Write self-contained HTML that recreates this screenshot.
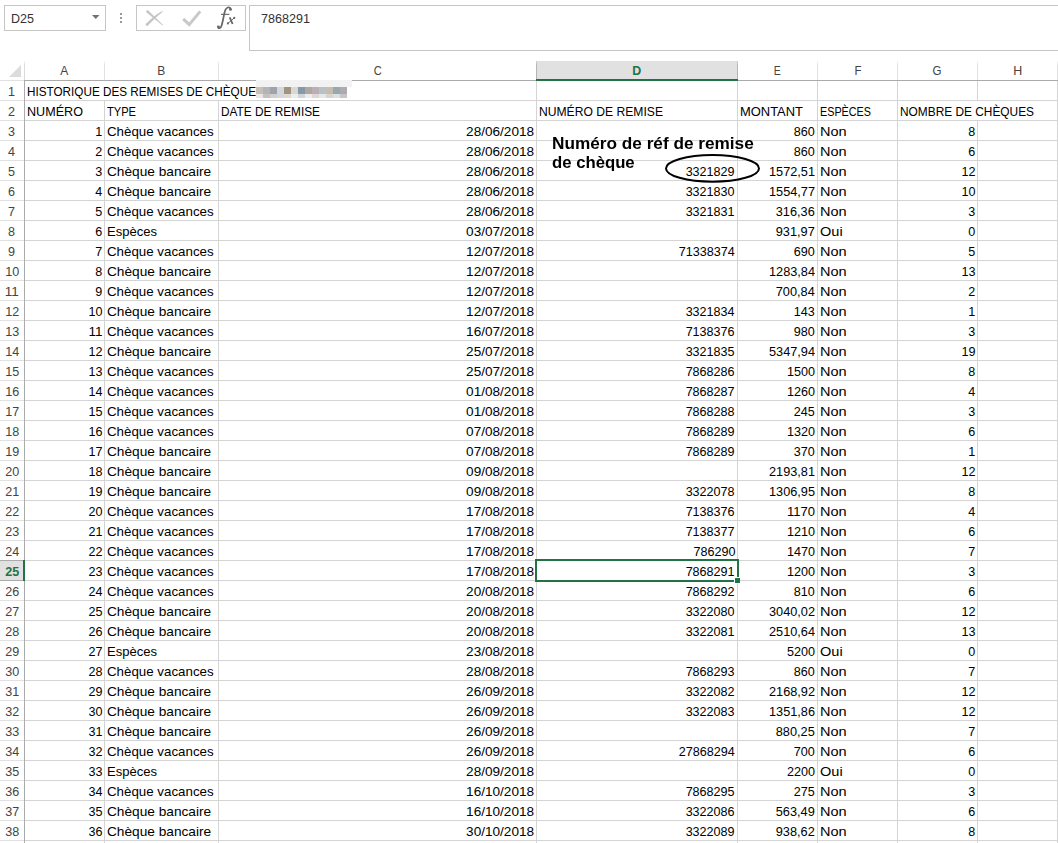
<!DOCTYPE html>
<html><head><meta charset="utf-8"><style>
html,body{margin:0;padding:0;background:#fff;}
body{width:1058px;height:843px;overflow:hidden;position:relative;}
.t{position:absolute;white-space:nowrap;line-height:1;}
.cell,.hdr,.hdrb{font-family:"Liberation Sans",sans-serif;font-size:13.0px;}
.hdrb{font-weight:bold;}
.ann{will-change:transform;font-family:"Liberation Sans",sans-serif;font-size:16.0px;font-weight:bold;}
</style></head><body>
<div style='position:absolute;left:104px;top:61px;width:1px;height:19px;background:#e1e1e1;background:linear-gradient(#f6f6f6,#e1e1e1 25%)'></div>
<div style='position:absolute;left:218px;top:61px;width:1px;height:19px;background:#e1e1e1;background:linear-gradient(#f6f6f6,#e1e1e1 25%)'></div>
<div style='position:absolute;left:536px;top:61px;width:1px;height:19px;background:#e1e1e1;background:linear-gradient(#f6f6f6,#e1e1e1 25%)'></div>
<div style='position:absolute;left:737px;top:61px;width:1px;height:19px;background:#e1e1e1;background:linear-gradient(#f6f6f6,#e1e1e1 25%)'></div>
<div style='position:absolute;left:817px;top:61px;width:1px;height:19px;background:#e1e1e1;background:linear-gradient(#f6f6f6,#e1e1e1 25%)'></div>
<div style='position:absolute;left:897px;top:61px;width:1px;height:19px;background:#e1e1e1;background:linear-gradient(#f6f6f6,#e1e1e1 25%)'></div>
<div style='position:absolute;left:977px;top:61px;width:1px;height:19px;background:#e1e1e1;background:linear-gradient(#f6f6f6,#e1e1e1 25%)'></div>
<div style='position:absolute;left:1057px;top:61px;width:1px;height:19px;background:#e1e1e1;background:linear-gradient(#f6f6f6,#e1e1e1 25%)'></div>
<div style='position:absolute;left:537px;top:61px;width:200px;height:18px;background:#e1e1e1;'></div>
<div style='position:absolute;left:536px;top:61px;width:1px;height:19px;background:#ababab;background:linear-gradient(#d0d0d0,#b4b4b4 25%)'></div>
<div style='position:absolute;left:737px;top:61px;width:1px;height:19px;background:#ababab;background:linear-gradient(#d0d0d0,#b4b4b4 25%)'></div>
<div style='position:absolute;left:0px;top:80px;width:24px;height:1px;background:#e1e1e1;'></div>
<div style='position:absolute;left:24px;top:80px;width:1034px;height:1px;background:#ababab;'></div>
<div style='position:absolute;left:536px;top:79px;width:202px;height:2px;background:#217346;'></div>
<div style='position:absolute;left:24px;top:61px;width:1px;height:19px;background:#e1e1e1;background:linear-gradient(#f6f6f6,#dadada 25%)'></div>
<div style='position:absolute;left:24px;top:80px;width:1px;height:763px;background:#ababab;'></div>
<div style='position:absolute;left:0px;top:100px;width:24px;height:1px;background:#e1e1e1;'></div>
<div style='position:absolute;left:25px;top:100px;width:1033px;height:1px;background:#d4d4d4;'></div>
<div style='position:absolute;left:0px;top:120px;width:24px;height:1px;background:#e1e1e1;'></div>
<div style='position:absolute;left:25px;top:120px;width:1033px;height:1px;background:#d4d4d4;'></div>
<div style='position:absolute;left:0px;top:140px;width:24px;height:1px;background:#e1e1e1;'></div>
<div style='position:absolute;left:25px;top:140px;width:1033px;height:1px;background:#d4d4d4;'></div>
<div style='position:absolute;left:0px;top:160px;width:24px;height:1px;background:#e1e1e1;'></div>
<div style='position:absolute;left:25px;top:160px;width:1033px;height:1px;background:#d4d4d4;'></div>
<div style='position:absolute;left:0px;top:180px;width:24px;height:1px;background:#e1e1e1;'></div>
<div style='position:absolute;left:25px;top:180px;width:1033px;height:1px;background:#d4d4d4;'></div>
<div style='position:absolute;left:0px;top:200px;width:24px;height:1px;background:#e1e1e1;'></div>
<div style='position:absolute;left:25px;top:200px;width:1033px;height:1px;background:#d4d4d4;'></div>
<div style='position:absolute;left:0px;top:220px;width:24px;height:1px;background:#e1e1e1;'></div>
<div style='position:absolute;left:25px;top:220px;width:1033px;height:1px;background:#d4d4d4;'></div>
<div style='position:absolute;left:0px;top:240px;width:24px;height:1px;background:#e1e1e1;'></div>
<div style='position:absolute;left:25px;top:240px;width:1033px;height:1px;background:#d4d4d4;'></div>
<div style='position:absolute;left:0px;top:260px;width:24px;height:1px;background:#e1e1e1;'></div>
<div style='position:absolute;left:25px;top:260px;width:1033px;height:1px;background:#d4d4d4;'></div>
<div style='position:absolute;left:0px;top:280px;width:24px;height:1px;background:#e1e1e1;'></div>
<div style='position:absolute;left:25px;top:280px;width:1033px;height:1px;background:#d4d4d4;'></div>
<div style='position:absolute;left:0px;top:300px;width:24px;height:1px;background:#e1e1e1;'></div>
<div style='position:absolute;left:25px;top:300px;width:1033px;height:1px;background:#d4d4d4;'></div>
<div style='position:absolute;left:0px;top:320px;width:24px;height:1px;background:#e1e1e1;'></div>
<div style='position:absolute;left:25px;top:320px;width:1033px;height:1px;background:#d4d4d4;'></div>
<div style='position:absolute;left:0px;top:340px;width:24px;height:1px;background:#e1e1e1;'></div>
<div style='position:absolute;left:25px;top:340px;width:1033px;height:1px;background:#d4d4d4;'></div>
<div style='position:absolute;left:0px;top:360px;width:24px;height:1px;background:#e1e1e1;'></div>
<div style='position:absolute;left:25px;top:360px;width:1033px;height:1px;background:#d4d4d4;'></div>
<div style='position:absolute;left:0px;top:380px;width:24px;height:1px;background:#e1e1e1;'></div>
<div style='position:absolute;left:25px;top:380px;width:1033px;height:1px;background:#d4d4d4;'></div>
<div style='position:absolute;left:0px;top:400px;width:24px;height:1px;background:#e1e1e1;'></div>
<div style='position:absolute;left:25px;top:400px;width:1033px;height:1px;background:#d4d4d4;'></div>
<div style='position:absolute;left:0px;top:420px;width:24px;height:1px;background:#e1e1e1;'></div>
<div style='position:absolute;left:25px;top:420px;width:1033px;height:1px;background:#d4d4d4;'></div>
<div style='position:absolute;left:0px;top:440px;width:24px;height:1px;background:#e1e1e1;'></div>
<div style='position:absolute;left:25px;top:440px;width:1033px;height:1px;background:#d4d4d4;'></div>
<div style='position:absolute;left:0px;top:460px;width:24px;height:1px;background:#e1e1e1;'></div>
<div style='position:absolute;left:25px;top:460px;width:1033px;height:1px;background:#d4d4d4;'></div>
<div style='position:absolute;left:0px;top:480px;width:24px;height:1px;background:#e1e1e1;'></div>
<div style='position:absolute;left:25px;top:480px;width:1033px;height:1px;background:#d4d4d4;'></div>
<div style='position:absolute;left:0px;top:500px;width:24px;height:1px;background:#e1e1e1;'></div>
<div style='position:absolute;left:25px;top:500px;width:1033px;height:1px;background:#d4d4d4;'></div>
<div style='position:absolute;left:0px;top:520px;width:24px;height:1px;background:#e1e1e1;'></div>
<div style='position:absolute;left:25px;top:520px;width:1033px;height:1px;background:#d4d4d4;'></div>
<div style='position:absolute;left:0px;top:540px;width:24px;height:1px;background:#e1e1e1;'></div>
<div style='position:absolute;left:25px;top:540px;width:1033px;height:1px;background:#d4d4d4;'></div>
<div style='position:absolute;left:0px;top:560px;width:24px;height:1px;background:#e1e1e1;'></div>
<div style='position:absolute;left:25px;top:560px;width:1033px;height:1px;background:#d4d4d4;'></div>
<div style='position:absolute;left:0px;top:580px;width:24px;height:1px;background:#e1e1e1;'></div>
<div style='position:absolute;left:25px;top:580px;width:1033px;height:1px;background:#d4d4d4;'></div>
<div style='position:absolute;left:0px;top:600px;width:24px;height:1px;background:#e1e1e1;'></div>
<div style='position:absolute;left:25px;top:600px;width:1033px;height:1px;background:#d4d4d4;'></div>
<div style='position:absolute;left:0px;top:620px;width:24px;height:1px;background:#e1e1e1;'></div>
<div style='position:absolute;left:25px;top:620px;width:1033px;height:1px;background:#d4d4d4;'></div>
<div style='position:absolute;left:0px;top:640px;width:24px;height:1px;background:#e1e1e1;'></div>
<div style='position:absolute;left:25px;top:640px;width:1033px;height:1px;background:#d4d4d4;'></div>
<div style='position:absolute;left:0px;top:660px;width:24px;height:1px;background:#e1e1e1;'></div>
<div style='position:absolute;left:25px;top:660px;width:1033px;height:1px;background:#d4d4d4;'></div>
<div style='position:absolute;left:0px;top:680px;width:24px;height:1px;background:#e1e1e1;'></div>
<div style='position:absolute;left:25px;top:680px;width:1033px;height:1px;background:#d4d4d4;'></div>
<div style='position:absolute;left:0px;top:700px;width:24px;height:1px;background:#e1e1e1;'></div>
<div style='position:absolute;left:25px;top:700px;width:1033px;height:1px;background:#d4d4d4;'></div>
<div style='position:absolute;left:0px;top:720px;width:24px;height:1px;background:#e1e1e1;'></div>
<div style='position:absolute;left:25px;top:720px;width:1033px;height:1px;background:#d4d4d4;'></div>
<div style='position:absolute;left:0px;top:740px;width:24px;height:1px;background:#e1e1e1;'></div>
<div style='position:absolute;left:25px;top:740px;width:1033px;height:1px;background:#d4d4d4;'></div>
<div style='position:absolute;left:0px;top:760px;width:24px;height:1px;background:#e1e1e1;'></div>
<div style='position:absolute;left:25px;top:760px;width:1033px;height:1px;background:#d4d4d4;'></div>
<div style='position:absolute;left:0px;top:780px;width:24px;height:1px;background:#e1e1e1;'></div>
<div style='position:absolute;left:25px;top:780px;width:1033px;height:1px;background:#d4d4d4;'></div>
<div style='position:absolute;left:0px;top:800px;width:24px;height:1px;background:#e1e1e1;'></div>
<div style='position:absolute;left:25px;top:800px;width:1033px;height:1px;background:#d4d4d4;'></div>
<div style='position:absolute;left:0px;top:820px;width:24px;height:1px;background:#e1e1e1;'></div>
<div style='position:absolute;left:25px;top:820px;width:1033px;height:1px;background:#d4d4d4;'></div>
<div style='position:absolute;left:0px;top:840px;width:24px;height:1px;background:#e1e1e1;'></div>
<div style='position:absolute;left:25px;top:840px;width:1033px;height:1px;background:#d4d4d4;'></div>
<div style='position:absolute;left:104px;top:101px;width:1px;height:742px;background:#d4d4d4;'></div>
<div style='position:absolute;left:218px;top:101px;width:1px;height:742px;background:#d4d4d4;'></div>
<div style='position:absolute;left:536px;top:81px;width:1px;height:762px;background:#d4d4d4;'></div>
<div style='position:absolute;left:737px;top:81px;width:1px;height:762px;background:#d4d4d4;'></div>
<div style='position:absolute;left:817px;top:81px;width:1px;height:762px;background:#d4d4d4;'></div>
<div style='position:absolute;left:897px;top:81px;width:1px;height:762px;background:#d4d4d4;'></div>
<div style='position:absolute;left:977px;top:81px;width:1px;height:20px;background:#d4d4d4;'></div>
<div style='position:absolute;left:977px;top:121px;width:1px;height:722px;background:#d4d4d4;'></div>
<div style='position:absolute;left:1057px;top:81px;width:1px;height:762px;background:#d4d4d4;'></div>
<div style='position:absolute;left:0px;top:561px;width:23px;height:19px;background:#e1e1e1;'></div>
<div style='position:absolute;left:0px;top:560px;width:24px;height:1px;background:#ababab;'></div>
<div style='position:absolute;left:0px;top:580px;width:24px;height:1px;background:#ababab;'></div>
<div style='position:absolute;left:23px;top:560px;width:2px;height:21px;background:#217346;'></div>
<div style='position:absolute;left:535px;top:559px;width:204px;height:2px;background:#217346;'></div>
<div style='position:absolute;left:535px;top:559px;width:2px;height:23px;background:#217346;'></div>
<div style='position:absolute;left:737px;top:559px;width:2px;height:18px;background:#217346;'></div>
<div style='position:absolute;left:535px;top:580px;width:199px;height:2px;background:#217346;'></div>
<div style='position:absolute;left:734px;top:577px;width:6px;height:6px;background:#fff;'></div>
<div style='position:absolute;left:735px;top:578px;width:5px;height:5px;background:#217346;'></div>
<svg style='position:absolute;left:0;top:60px' width='24' height='20'><polygon points='21,5 21,17 9,17' fill='#dcdcdc'/></svg>
<div style='position:absolute;left:4px;top:5px;width:100px;height:24px;border:1px solid #c6c6c6'></div>
<svg style='position:absolute;left:90px;top:13px' width='12' height='8'><polygon points='2,2 9.5,2 5.75,6' fill='#6e7276'/></svg>
<div style='position:absolute;left:120px;top:13px;width:2px;height:2px;background:#999;'></div>
<div style='position:absolute;left:120px;top:17px;width:2px;height:2px;background:#999;'></div>
<div style='position:absolute;left:120px;top:21px;width:2px;height:2px;background:#999;'></div>
<div style='position:absolute;left:136px;top:5px;width:108px;height:24px;border:1px solid #c6c6c6'></div>
<svg style='position:absolute;left:0;top:0' width='260' height='34'>
<g fill='#c6c6c6'>
<circle cx='147.6' cy='11.6' r='1.35'/>
<polygon points='146.65,12.55 148.55,10.65 163.1,25.0 162.5,25.6'/>
<circle cx='147.0' cy='24.6' r='1.3'/>
<path d='M146.1,23.8 Q153.5,15.6 162.3,10.9 L162.7,11.7 Q155.3,17.6 147.9,25.5 Z'/>
</g>
<path d='M183.2,18.8 L189.2,24.6 L200.2,11.4' stroke='#c8c8c8' stroke-width='3' fill='none' stroke-linejoin='miter'/>
<g fill='#666'>
<path d='M230.8,8.6 C229.2,6.6 226.4,7.0 225.1,10.6 C223.9,14.2 223.0,21.2 221.6,25.4 C220.9,27.6 219.6,28.9 218.1,27.9' stroke='#666' stroke-width='1.7' fill='none'/>
<circle cx='230.5' cy='9.4' r='1.45'/>
<circle cx='218.4' cy='26.9' r='1.45'/>
<rect x='221' y='13.8' width='8.4' height='1.1'/>
<path d='M227.6,23.6 L234.5,17.7' stroke='#666' stroke-width='1.0' fill='none'/>
<path d='M229.7,17.4 L232.6,24.0' stroke='#666' stroke-width='1.8' fill='none'/>
<circle cx='227.9' cy='23.4' r='1.05'/>
<circle cx='234.3' cy='17.9' r='1.05'/>
</g>
</svg>
<div style='position:absolute;left:249px;top:5px;width:820px;height:44px;border:1px solid #c6c6c6'></div>
<div style='position:absolute;left:256px;top:80px;width:96px;height:7px;background:#f2f2f2;'></div>
<div style='position:absolute;left:256px;top:87px;width:7px;height:7px;background:#c8c0b8;'></div>
<div style='position:absolute;left:256px;top:94px;width:7px;height:4px;background:#e8e8e8;'></div>
<div style='position:absolute;left:263px;top:87px;width:7px;height:7px;background:#b4b4b8;'></div>
<div style='position:absolute;left:263px;top:94px;width:7px;height:4px;background:#c8c0bc;'></div>
<div style='position:absolute;left:270px;top:87px;width:7px;height:7px;background:#a0a4a8;'></div>
<div style='position:absolute;left:270px;top:94px;width:7px;height:4px;background:#d0d0d0;'></div>
<div style='position:absolute;left:277px;top:87px;width:7px;height:7px;background:#d4d8dc;'></div>
<div style='position:absolute;left:277px;top:94px;width:7px;height:4px;background:#d4d8dc;'></div>
<div style='position:absolute;left:284px;top:87px;width:7px;height:7px;background:#a09480;'></div>
<div style='position:absolute;left:284px;top:94px;width:7px;height:4px;background:#e0d8d0;'></div>
<div style='position:absolute;left:291px;top:87px;width:7px;height:7px;background:#d8d8d4;'></div>
<div style='position:absolute;left:291px;top:94px;width:7px;height:4px;background:#eceeec;'></div>
<div style='position:absolute;left:298px;top:87px;width:7px;height:7px;background:#8898a4;'></div>
<div style='position:absolute;left:298px;top:94px;width:7px;height:4px;background:#d0d4dc;'></div>
<div style='position:absolute;left:305px;top:87px;width:7px;height:7px;background:#b0a8a0;'></div>
<div style='position:absolute;left:305px;top:94px;width:7px;height:4px;background:#ececec;'></div>
<div style='position:absolute;left:312px;top:87px;width:7px;height:7px;background:#b8b0b4;'></div>
<div style='position:absolute;left:312px;top:94px;width:7px;height:4px;background:#e0d4d4;'></div>
<div style='position:absolute;left:319px;top:87px;width:7px;height:7px;background:#b8c0c8;'></div>
<div style='position:absolute;left:319px;top:94px;width:7px;height:4px;background:#e4e8e8;'></div>
<div style='position:absolute;left:326px;top:87px;width:7px;height:7px;background:#c8bcb0;'></div>
<div style='position:absolute;left:326px;top:94px;width:7px;height:4px;background:#d8d4d0;'></div>
<div style='position:absolute;left:333px;top:87px;width:7px;height:7px;background:#98a8b0;'></div>
<div style='position:absolute;left:333px;top:94px;width:7px;height:4px;background:#dce0e4;'></div>
<div style='position:absolute;left:340px;top:87px;width:7px;height:7px;background:#acacb0;'></div>
<div style='position:absolute;left:340px;top:94px;width:7px;height:4px;background:#c8c4c8;'></div>
<svg style='position:absolute;left:660px;top:150px' width='110' height='40'><ellipse cx='52.5' cy='18.4' rx='46.5' ry='13.3' stroke='#000' stroke-width='2' fill='none'/></svg>
<span class='t cell' style='left:26.6px;transform-origin:0 0;top:85.00px;color:#000;transform:scaleX(0.9015)'>HISTORIQUE DES REMISES DE CHÈQUE</span>
<span class='t cell' style='left:26.6px;transform-origin:0 0;top:105.00px;color:#000;transform:scaleX(0.9692)'>NUMÉRO</span>
<span class='t cell' style='left:106.6px;transform-origin:0 0;top:105.00px;color:#000;transform:scaleX(0.8537)'>TYPE</span>
<span class='t cell' style='left:220.6px;transform-origin:0 0;top:105.00px;color:#000;transform:scaleX(0.9096)'>DATE DE REMISE</span>
<span class='t cell' style='left:538.6px;transform-origin:0 0;top:105.00px;color:#000;transform:scaleX(0.9330)'>NUMÉRO DE REMISE</span>
<span class='t cell' style='left:739.6px;transform-origin:0 0;top:105.00px;color:#000;transform:scaleX(0.9951)'>MONTANT</span>
<span class='t cell' style='left:819.6px;transform-origin:0 0;top:105.00px;color:#000;transform:scaleX(0.8303)'>ESPÈCES</span>
<span class='t cell' style='left:899.6px;transform-origin:0 0;top:105.00px;color:#000;transform:scaleX(0.9138)'>NOMBRE DE CHÈQUES</span>
<span class='t cell' style='right:956px;transform-origin:100% 0;top:125.00px;color:#000;transform:scaleX(0.9676)'>1</span>
<span class='t cell' style='left:106.6px;transform-origin:0 0;top:125.00px;color:#000;transform:scaleX(1.0247)'>Chèque vacances</span>
<span class='t cell' style='right:524px;transform-origin:100% 0;top:125.00px;color:#000;transform:scaleX(1.0449)'>28/06/2018</span>
<span class='t cell' style='right:243px;transform-origin:100% 0;top:125.00px;color:#000;transform:scaleX(0.9676)'>860</span>
<span class='t cell' style='left:819.6px;transform-origin:0 0;top:125.00px;color:#000;transform:scaleX(1.1158)'>Non</span>
<span class='t cell' style='right:83px;transform-origin:100% 0;top:125.00px;color:#000;transform:scaleX(0.9676)'>8</span>
<span class='t cell' style='right:956px;transform-origin:100% 0;top:145.00px;color:#000;transform:scaleX(0.9676)'>2</span>
<span class='t cell' style='left:106.6px;transform-origin:0 0;top:145.00px;color:#000;transform:scaleX(1.0247)'>Chèque vacances</span>
<span class='t cell' style='right:524px;transform-origin:100% 0;top:145.00px;color:#000;transform:scaleX(1.0449)'>28/06/2018</span>
<span class='t cell' style='right:243px;transform-origin:100% 0;top:145.00px;color:#000;transform:scaleX(0.9676)'>860</span>
<span class='t cell' style='left:819.6px;transform-origin:0 0;top:145.00px;color:#000;transform:scaleX(1.1158)'>Non</span>
<span class='t cell' style='right:83px;transform-origin:100% 0;top:145.00px;color:#000;transform:scaleX(0.9676)'>6</span>
<span class='t cell' style='right:956px;transform-origin:100% 0;top:165.00px;color:#000;transform:scaleX(0.9676)'>3</span>
<span class='t cell' style='left:106.6px;transform-origin:0 0;top:165.00px;color:#000;transform:scaleX(1.0517)'>Chèque bancaire</span>
<span class='t cell' style='right:524px;transform-origin:100% 0;top:165.00px;color:#000;transform:scaleX(1.0449)'>28/06/2018</span>
<span class='t cell' style='right:323px;transform-origin:100% 0;top:165.00px;color:#000;transform:scaleX(0.9679)'>3321829</span>
<span class='t cell' style='right:243px;transform-origin:100% 0;top:165.00px;color:#000;transform:scaleX(0.9787)'>1572,51</span>
<span class='t cell' style='left:819.6px;transform-origin:0 0;top:165.00px;color:#000;transform:scaleX(1.1158)'>Non</span>
<span class='t cell' style='right:83px;transform-origin:100% 0;top:165.00px;color:#000;transform:scaleX(0.9676)'>12</span>
<span class='t cell' style='right:956px;transform-origin:100% 0;top:185.00px;color:#000;transform:scaleX(0.9676)'>4</span>
<span class='t cell' style='left:106.6px;transform-origin:0 0;top:185.00px;color:#000;transform:scaleX(1.0517)'>Chèque bancaire</span>
<span class='t cell' style='right:524px;transform-origin:100% 0;top:185.00px;color:#000;transform:scaleX(1.0449)'>28/06/2018</span>
<span class='t cell' style='right:323px;transform-origin:100% 0;top:185.00px;color:#000;transform:scaleX(0.9679)'>3321830</span>
<span class='t cell' style='right:243px;transform-origin:100% 0;top:185.00px;color:#000;transform:scaleX(0.9787)'>1554,77</span>
<span class='t cell' style='left:819.6px;transform-origin:0 0;top:185.00px;color:#000;transform:scaleX(1.1158)'>Non</span>
<span class='t cell' style='right:83px;transform-origin:100% 0;top:185.00px;color:#000;transform:scaleX(0.9676)'>10</span>
<span class='t cell' style='right:956px;transform-origin:100% 0;top:205.00px;color:#000;transform:scaleX(0.9676)'>5</span>
<span class='t cell' style='left:106.6px;transform-origin:0 0;top:205.00px;color:#000;transform:scaleX(1.0247)'>Chèque vacances</span>
<span class='t cell' style='right:524px;transform-origin:100% 0;top:205.00px;color:#000;transform:scaleX(1.0449)'>28/06/2018</span>
<span class='t cell' style='right:323px;transform-origin:100% 0;top:205.00px;color:#000;transform:scaleX(0.9679)'>3321831</span>
<span class='t cell' style='right:243px;transform-origin:100% 0;top:205.00px;color:#000;transform:scaleX(0.9807)'>316,36</span>
<span class='t cell' style='left:819.6px;transform-origin:0 0;top:205.00px;color:#000;transform:scaleX(1.1158)'>Non</span>
<span class='t cell' style='right:83px;transform-origin:100% 0;top:205.00px;color:#000;transform:scaleX(0.9676)'>3</span>
<span class='t cell' style='right:956px;transform-origin:100% 0;top:225.00px;color:#000;transform:scaleX(0.9676)'>6</span>
<span class='t cell' style='left:106.6px;transform-origin:0 0;top:225.00px;color:#000;transform:scaleX(1.0027)'>Espèces</span>
<span class='t cell' style='right:524px;transform-origin:100% 0;top:225.00px;color:#000;transform:scaleX(1.0449)'>03/07/2018</span>
<span class='t cell' style='right:243px;transform-origin:100% 0;top:225.00px;color:#000;transform:scaleX(0.9807)'>931,97</span>
<span class='t cell' style='left:819.6px;transform-origin:0 0;top:225.00px;color:#000;transform:scaleX(1.1189)'>Oui</span>
<span class='t cell' style='right:83px;transform-origin:100% 0;top:225.00px;color:#000;transform:scaleX(0.9676)'>0</span>
<span class='t cell' style='right:956px;transform-origin:100% 0;top:245.00px;color:#000;transform:scaleX(0.9676)'>7</span>
<span class='t cell' style='left:106.6px;transform-origin:0 0;top:245.00px;color:#000;transform:scaleX(1.0247)'>Chèque vacances</span>
<span class='t cell' style='right:524px;transform-origin:100% 0;top:245.00px;color:#000;transform:scaleX(1.0449)'>12/07/2018</span>
<span class='t cell' style='right:323px;transform-origin:100% 0;top:245.00px;color:#000;transform:scaleX(0.9681)'>71338374</span>
<span class='t cell' style='right:243px;transform-origin:100% 0;top:245.00px;color:#000;transform:scaleX(0.9676)'>690</span>
<span class='t cell' style='left:819.6px;transform-origin:0 0;top:245.00px;color:#000;transform:scaleX(1.1158)'>Non</span>
<span class='t cell' style='right:83px;transform-origin:100% 0;top:245.00px;color:#000;transform:scaleX(0.9676)'>5</span>
<span class='t cell' style='right:956px;transform-origin:100% 0;top:265.00px;color:#000;transform:scaleX(0.9676)'>8</span>
<span class='t cell' style='left:106.6px;transform-origin:0 0;top:265.00px;color:#000;transform:scaleX(1.0517)'>Chèque bancaire</span>
<span class='t cell' style='right:524px;transform-origin:100% 0;top:265.00px;color:#000;transform:scaleX(1.0449)'>12/07/2018</span>
<span class='t cell' style='right:243px;transform-origin:100% 0;top:265.00px;color:#000;transform:scaleX(0.9787)'>1283,84</span>
<span class='t cell' style='left:819.6px;transform-origin:0 0;top:265.00px;color:#000;transform:scaleX(1.1158)'>Non</span>
<span class='t cell' style='right:83px;transform-origin:100% 0;top:265.00px;color:#000;transform:scaleX(0.9676)'>13</span>
<span class='t cell' style='right:956px;transform-origin:100% 0;top:285.00px;color:#000;transform:scaleX(0.9676)'>9</span>
<span class='t cell' style='left:106.6px;transform-origin:0 0;top:285.00px;color:#000;transform:scaleX(1.0247)'>Chèque vacances</span>
<span class='t cell' style='right:524px;transform-origin:100% 0;top:285.00px;color:#000;transform:scaleX(1.0449)'>12/07/2018</span>
<span class='t cell' style='right:243px;transform-origin:100% 0;top:285.00px;color:#000;transform:scaleX(0.9807)'>700,84</span>
<span class='t cell' style='left:819.6px;transform-origin:0 0;top:285.00px;color:#000;transform:scaleX(1.1158)'>Non</span>
<span class='t cell' style='right:83px;transform-origin:100% 0;top:285.00px;color:#000;transform:scaleX(0.9676)'>2</span>
<span class='t cell' style='right:956px;transform-origin:100% 0;top:305.00px;color:#000;transform:scaleX(0.9676)'>10</span>
<span class='t cell' style='left:106.6px;transform-origin:0 0;top:305.00px;color:#000;transform:scaleX(1.0517)'>Chèque bancaire</span>
<span class='t cell' style='right:524px;transform-origin:100% 0;top:305.00px;color:#000;transform:scaleX(1.0449)'>12/07/2018</span>
<span class='t cell' style='right:323px;transform-origin:100% 0;top:305.00px;color:#000;transform:scaleX(0.9679)'>3321834</span>
<span class='t cell' style='right:243px;transform-origin:100% 0;top:305.00px;color:#000;transform:scaleX(0.9676)'>143</span>
<span class='t cell' style='left:819.6px;transform-origin:0 0;top:305.00px;color:#000;transform:scaleX(1.1158)'>Non</span>
<span class='t cell' style='right:83px;transform-origin:100% 0;top:305.00px;color:#000;transform:scaleX(0.9676)'>1</span>
<span class='t cell' style='right:956px;transform-origin:100% 0;top:325.00px;color:#000;transform:scaleX(1.0370)'>11</span>
<span class='t cell' style='left:106.6px;transform-origin:0 0;top:325.00px;color:#000;transform:scaleX(1.0247)'>Chèque vacances</span>
<span class='t cell' style='right:524px;transform-origin:100% 0;top:325.00px;color:#000;transform:scaleX(1.0449)'>16/07/2018</span>
<span class='t cell' style='right:323px;transform-origin:100% 0;top:325.00px;color:#000;transform:scaleX(0.9679)'>7138376</span>
<span class='t cell' style='right:243px;transform-origin:100% 0;top:325.00px;color:#000;transform:scaleX(0.9676)'>980</span>
<span class='t cell' style='left:819.6px;transform-origin:0 0;top:325.00px;color:#000;transform:scaleX(1.1158)'>Non</span>
<span class='t cell' style='right:83px;transform-origin:100% 0;top:325.00px;color:#000;transform:scaleX(0.9676)'>3</span>
<span class='t cell' style='right:956px;transform-origin:100% 0;top:345.00px;color:#000;transform:scaleX(0.9676)'>12</span>
<span class='t cell' style='left:106.6px;transform-origin:0 0;top:345.00px;color:#000;transform:scaleX(1.0517)'>Chèque bancaire</span>
<span class='t cell' style='right:524px;transform-origin:100% 0;top:345.00px;color:#000;transform:scaleX(1.0449)'>25/07/2018</span>
<span class='t cell' style='right:323px;transform-origin:100% 0;top:345.00px;color:#000;transform:scaleX(0.9679)'>3321835</span>
<span class='t cell' style='right:243px;transform-origin:100% 0;top:345.00px;color:#000;transform:scaleX(0.9787)'>5347,94</span>
<span class='t cell' style='left:819.6px;transform-origin:0 0;top:345.00px;color:#000;transform:scaleX(1.1158)'>Non</span>
<span class='t cell' style='right:83px;transform-origin:100% 0;top:345.00px;color:#000;transform:scaleX(0.9676)'>19</span>
<span class='t cell' style='right:956px;transform-origin:100% 0;top:365.00px;color:#000;transform:scaleX(0.9676)'>13</span>
<span class='t cell' style='left:106.6px;transform-origin:0 0;top:365.00px;color:#000;transform:scaleX(1.0247)'>Chèque vacances</span>
<span class='t cell' style='right:524px;transform-origin:100% 0;top:365.00px;color:#000;transform:scaleX(1.0449)'>25/07/2018</span>
<span class='t cell' style='right:323px;transform-origin:100% 0;top:365.00px;color:#000;transform:scaleX(0.9679)'>7868286</span>
<span class='t cell' style='right:243px;transform-origin:100% 0;top:365.00px;color:#000;transform:scaleX(0.9681)'>1500</span>
<span class='t cell' style='left:819.6px;transform-origin:0 0;top:365.00px;color:#000;transform:scaleX(1.1158)'>Non</span>
<span class='t cell' style='right:83px;transform-origin:100% 0;top:365.00px;color:#000;transform:scaleX(0.9676)'>8</span>
<span class='t cell' style='right:956px;transform-origin:100% 0;top:385.00px;color:#000;transform:scaleX(0.9676)'>14</span>
<span class='t cell' style='left:106.6px;transform-origin:0 0;top:385.00px;color:#000;transform:scaleX(1.0247)'>Chèque vacances</span>
<span class='t cell' style='right:524px;transform-origin:100% 0;top:385.00px;color:#000;transform:scaleX(1.0449)'>01/08/2018</span>
<span class='t cell' style='right:323px;transform-origin:100% 0;top:385.00px;color:#000;transform:scaleX(0.9679)'>7868287</span>
<span class='t cell' style='right:243px;transform-origin:100% 0;top:385.00px;color:#000;transform:scaleX(0.9681)'>1260</span>
<span class='t cell' style='left:819.6px;transform-origin:0 0;top:385.00px;color:#000;transform:scaleX(1.1158)'>Non</span>
<span class='t cell' style='right:83px;transform-origin:100% 0;top:385.00px;color:#000;transform:scaleX(0.9676)'>4</span>
<span class='t cell' style='right:956px;transform-origin:100% 0;top:405.00px;color:#000;transform:scaleX(0.9676)'>15</span>
<span class='t cell' style='left:106.6px;transform-origin:0 0;top:405.00px;color:#000;transform:scaleX(1.0247)'>Chèque vacances</span>
<span class='t cell' style='right:524px;transform-origin:100% 0;top:405.00px;color:#000;transform:scaleX(1.0449)'>01/08/2018</span>
<span class='t cell' style='right:323px;transform-origin:100% 0;top:405.00px;color:#000;transform:scaleX(0.9679)'>7868288</span>
<span class='t cell' style='right:243px;transform-origin:100% 0;top:405.00px;color:#000;transform:scaleX(0.9676)'>245</span>
<span class='t cell' style='left:819.6px;transform-origin:0 0;top:405.00px;color:#000;transform:scaleX(1.1158)'>Non</span>
<span class='t cell' style='right:83px;transform-origin:100% 0;top:405.00px;color:#000;transform:scaleX(0.9676)'>3</span>
<span class='t cell' style='right:956px;transform-origin:100% 0;top:425.00px;color:#000;transform:scaleX(0.9676)'>16</span>
<span class='t cell' style='left:106.6px;transform-origin:0 0;top:425.00px;color:#000;transform:scaleX(1.0247)'>Chèque vacances</span>
<span class='t cell' style='right:524px;transform-origin:100% 0;top:425.00px;color:#000;transform:scaleX(1.0449)'>07/08/2018</span>
<span class='t cell' style='right:323px;transform-origin:100% 0;top:425.00px;color:#000;transform:scaleX(0.9679)'>7868289</span>
<span class='t cell' style='right:243px;transform-origin:100% 0;top:425.00px;color:#000;transform:scaleX(0.9681)'>1320</span>
<span class='t cell' style='left:819.6px;transform-origin:0 0;top:425.00px;color:#000;transform:scaleX(1.1158)'>Non</span>
<span class='t cell' style='right:83px;transform-origin:100% 0;top:425.00px;color:#000;transform:scaleX(0.9676)'>6</span>
<span class='t cell' style='right:956px;transform-origin:100% 0;top:445.00px;color:#000;transform:scaleX(0.9676)'>17</span>
<span class='t cell' style='left:106.6px;transform-origin:0 0;top:445.00px;color:#000;transform:scaleX(1.0517)'>Chèque bancaire</span>
<span class='t cell' style='right:524px;transform-origin:100% 0;top:445.00px;color:#000;transform:scaleX(1.0449)'>07/08/2018</span>
<span class='t cell' style='right:323px;transform-origin:100% 0;top:445.00px;color:#000;transform:scaleX(0.9679)'>7868289</span>
<span class='t cell' style='right:243px;transform-origin:100% 0;top:445.00px;color:#000;transform:scaleX(0.9676)'>370</span>
<span class='t cell' style='left:819.6px;transform-origin:0 0;top:445.00px;color:#000;transform:scaleX(1.1158)'>Non</span>
<span class='t cell' style='right:83px;transform-origin:100% 0;top:445.00px;color:#000;transform:scaleX(0.9676)'>1</span>
<span class='t cell' style='right:956px;transform-origin:100% 0;top:465.00px;color:#000;transform:scaleX(0.9676)'>18</span>
<span class='t cell' style='left:106.6px;transform-origin:0 0;top:465.00px;color:#000;transform:scaleX(1.0517)'>Chèque bancaire</span>
<span class='t cell' style='right:524px;transform-origin:100% 0;top:465.00px;color:#000;transform:scaleX(1.0449)'>09/08/2018</span>
<span class='t cell' style='right:243px;transform-origin:100% 0;top:465.00px;color:#000;transform:scaleX(0.9787)'>2193,81</span>
<span class='t cell' style='left:819.6px;transform-origin:0 0;top:465.00px;color:#000;transform:scaleX(1.1158)'>Non</span>
<span class='t cell' style='right:83px;transform-origin:100% 0;top:465.00px;color:#000;transform:scaleX(0.9676)'>12</span>
<span class='t cell' style='right:956px;transform-origin:100% 0;top:485.00px;color:#000;transform:scaleX(0.9676)'>19</span>
<span class='t cell' style='left:106.6px;transform-origin:0 0;top:485.00px;color:#000;transform:scaleX(1.0517)'>Chèque bancaire</span>
<span class='t cell' style='right:524px;transform-origin:100% 0;top:485.00px;color:#000;transform:scaleX(1.0449)'>09/08/2018</span>
<span class='t cell' style='right:323px;transform-origin:100% 0;top:485.00px;color:#000;transform:scaleX(0.9679)'>3322078</span>
<span class='t cell' style='right:243px;transform-origin:100% 0;top:485.00px;color:#000;transform:scaleX(0.9787)'>1306,95</span>
<span class='t cell' style='left:819.6px;transform-origin:0 0;top:485.00px;color:#000;transform:scaleX(1.1158)'>Non</span>
<span class='t cell' style='right:83px;transform-origin:100% 0;top:485.00px;color:#000;transform:scaleX(0.9676)'>8</span>
<span class='t cell' style='right:956px;transform-origin:100% 0;top:505.00px;color:#000;transform:scaleX(0.9676)'>20</span>
<span class='t cell' style='left:106.6px;transform-origin:0 0;top:505.00px;color:#000;transform:scaleX(1.0247)'>Chèque vacances</span>
<span class='t cell' style='right:524px;transform-origin:100% 0;top:505.00px;color:#000;transform:scaleX(1.0449)'>17/08/2018</span>
<span class='t cell' style='right:323px;transform-origin:100% 0;top:505.00px;color:#000;transform:scaleX(0.9679)'>7138376</span>
<span class='t cell' style='right:243px;transform-origin:100% 0;top:505.00px;color:#000;transform:scaleX(1.0011)'>1170</span>
<span class='t cell' style='left:819.6px;transform-origin:0 0;top:505.00px;color:#000;transform:scaleX(1.1158)'>Non</span>
<span class='t cell' style='right:83px;transform-origin:100% 0;top:505.00px;color:#000;transform:scaleX(0.9676)'>4</span>
<span class='t cell' style='right:956px;transform-origin:100% 0;top:525.00px;color:#000;transform:scaleX(0.9676)'>21</span>
<span class='t cell' style='left:106.6px;transform-origin:0 0;top:525.00px;color:#000;transform:scaleX(1.0247)'>Chèque vacances</span>
<span class='t cell' style='right:524px;transform-origin:100% 0;top:525.00px;color:#000;transform:scaleX(1.0449)'>17/08/2018</span>
<span class='t cell' style='right:323px;transform-origin:100% 0;top:525.00px;color:#000;transform:scaleX(0.9679)'>7138377</span>
<span class='t cell' style='right:243px;transform-origin:100% 0;top:525.00px;color:#000;transform:scaleX(0.9681)'>1210</span>
<span class='t cell' style='left:819.6px;transform-origin:0 0;top:525.00px;color:#000;transform:scaleX(1.1158)'>Non</span>
<span class='t cell' style='right:83px;transform-origin:100% 0;top:525.00px;color:#000;transform:scaleX(0.9676)'>6</span>
<span class='t cell' style='right:956px;transform-origin:100% 0;top:545.00px;color:#000;transform:scaleX(0.9676)'>22</span>
<span class='t cell' style='left:106.6px;transform-origin:0 0;top:545.00px;color:#000;transform:scaleX(1.0247)'>Chèque vacances</span>
<span class='t cell' style='right:524px;transform-origin:100% 0;top:545.00px;color:#000;transform:scaleX(1.0449)'>17/08/2018</span>
<span class='t cell' style='right:323px;transform-origin:100% 0;top:545.00px;color:#000;transform:scaleX(0.9680)'>786290</span>
<span class='t cell' style='right:243px;transform-origin:100% 0;top:545.00px;color:#000;transform:scaleX(0.9681)'>1470</span>
<span class='t cell' style='left:819.6px;transform-origin:0 0;top:545.00px;color:#000;transform:scaleX(1.1158)'>Non</span>
<span class='t cell' style='right:83px;transform-origin:100% 0;top:545.00px;color:#000;transform:scaleX(0.9676)'>7</span>
<span class='t cell' style='right:956px;transform-origin:100% 0;top:565.00px;color:#000;transform:scaleX(0.9676)'>23</span>
<span class='t cell' style='left:106.6px;transform-origin:0 0;top:565.00px;color:#000;transform:scaleX(1.0247)'>Chèque vacances</span>
<span class='t cell' style='right:524px;transform-origin:100% 0;top:565.00px;color:#000;transform:scaleX(1.0449)'>17/08/2018</span>
<span class='t cell' style='right:323px;transform-origin:100% 0;top:565.00px;color:#000;transform:scaleX(0.9679)'>7868291</span>
<span class='t cell' style='right:243px;transform-origin:100% 0;top:565.00px;color:#000;transform:scaleX(0.9681)'>1200</span>
<span class='t cell' style='left:819.6px;transform-origin:0 0;top:565.00px;color:#000;transform:scaleX(1.1158)'>Non</span>
<span class='t cell' style='right:83px;transform-origin:100% 0;top:565.00px;color:#000;transform:scaleX(0.9676)'>3</span>
<span class='t cell' style='right:956px;transform-origin:100% 0;top:585.00px;color:#000;transform:scaleX(0.9676)'>24</span>
<span class='t cell' style='left:106.6px;transform-origin:0 0;top:585.00px;color:#000;transform:scaleX(1.0247)'>Chèque vacances</span>
<span class='t cell' style='right:524px;transform-origin:100% 0;top:585.00px;color:#000;transform:scaleX(1.0449)'>20/08/2018</span>
<span class='t cell' style='right:323px;transform-origin:100% 0;top:585.00px;color:#000;transform:scaleX(0.9679)'>7868292</span>
<span class='t cell' style='right:243px;transform-origin:100% 0;top:585.00px;color:#000;transform:scaleX(0.9676)'>810</span>
<span class='t cell' style='left:819.6px;transform-origin:0 0;top:585.00px;color:#000;transform:scaleX(1.1158)'>Non</span>
<span class='t cell' style='right:83px;transform-origin:100% 0;top:585.00px;color:#000;transform:scaleX(0.9676)'>6</span>
<span class='t cell' style='right:956px;transform-origin:100% 0;top:605.00px;color:#000;transform:scaleX(0.9676)'>25</span>
<span class='t cell' style='left:106.6px;transform-origin:0 0;top:605.00px;color:#000;transform:scaleX(1.0517)'>Chèque bancaire</span>
<span class='t cell' style='right:524px;transform-origin:100% 0;top:605.00px;color:#000;transform:scaleX(1.0449)'>20/08/2018</span>
<span class='t cell' style='right:323px;transform-origin:100% 0;top:605.00px;color:#000;transform:scaleX(0.9679)'>3322080</span>
<span class='t cell' style='right:243px;transform-origin:100% 0;top:605.00px;color:#000;transform:scaleX(0.9787)'>3040,02</span>
<span class='t cell' style='left:819.6px;transform-origin:0 0;top:605.00px;color:#000;transform:scaleX(1.1158)'>Non</span>
<span class='t cell' style='right:83px;transform-origin:100% 0;top:605.00px;color:#000;transform:scaleX(0.9676)'>12</span>
<span class='t cell' style='right:956px;transform-origin:100% 0;top:625.00px;color:#000;transform:scaleX(0.9676)'>26</span>
<span class='t cell' style='left:106.6px;transform-origin:0 0;top:625.00px;color:#000;transform:scaleX(1.0517)'>Chèque bancaire</span>
<span class='t cell' style='right:524px;transform-origin:100% 0;top:625.00px;color:#000;transform:scaleX(1.0449)'>20/08/2018</span>
<span class='t cell' style='right:323px;transform-origin:100% 0;top:625.00px;color:#000;transform:scaleX(0.9679)'>3322081</span>
<span class='t cell' style='right:243px;transform-origin:100% 0;top:625.00px;color:#000;transform:scaleX(0.9787)'>2510,64</span>
<span class='t cell' style='left:819.6px;transform-origin:0 0;top:625.00px;color:#000;transform:scaleX(1.1158)'>Non</span>
<span class='t cell' style='right:83px;transform-origin:100% 0;top:625.00px;color:#000;transform:scaleX(0.9676)'>13</span>
<span class='t cell' style='right:956px;transform-origin:100% 0;top:645.00px;color:#000;transform:scaleX(0.9676)'>27</span>
<span class='t cell' style='left:106.6px;transform-origin:0 0;top:645.00px;color:#000;transform:scaleX(1.0027)'>Espèces</span>
<span class='t cell' style='right:524px;transform-origin:100% 0;top:645.00px;color:#000;transform:scaleX(1.0449)'>23/08/2018</span>
<span class='t cell' style='right:243px;transform-origin:100% 0;top:645.00px;color:#000;transform:scaleX(0.9681)'>5200</span>
<span class='t cell' style='left:819.6px;transform-origin:0 0;top:645.00px;color:#000;transform:scaleX(1.1189)'>Oui</span>
<span class='t cell' style='right:83px;transform-origin:100% 0;top:645.00px;color:#000;transform:scaleX(0.9676)'>0</span>
<span class='t cell' style='right:956px;transform-origin:100% 0;top:665.00px;color:#000;transform:scaleX(0.9676)'>28</span>
<span class='t cell' style='left:106.6px;transform-origin:0 0;top:665.00px;color:#000;transform:scaleX(1.0247)'>Chèque vacances</span>
<span class='t cell' style='right:524px;transform-origin:100% 0;top:665.00px;color:#000;transform:scaleX(1.0449)'>28/08/2018</span>
<span class='t cell' style='right:323px;transform-origin:100% 0;top:665.00px;color:#000;transform:scaleX(0.9679)'>7868293</span>
<span class='t cell' style='right:243px;transform-origin:100% 0;top:665.00px;color:#000;transform:scaleX(0.9676)'>860</span>
<span class='t cell' style='left:819.6px;transform-origin:0 0;top:665.00px;color:#000;transform:scaleX(1.1158)'>Non</span>
<span class='t cell' style='right:83px;transform-origin:100% 0;top:665.00px;color:#000;transform:scaleX(0.9676)'>7</span>
<span class='t cell' style='right:956px;transform-origin:100% 0;top:685.00px;color:#000;transform:scaleX(0.9676)'>29</span>
<span class='t cell' style='left:106.6px;transform-origin:0 0;top:685.00px;color:#000;transform:scaleX(1.0517)'>Chèque bancaire</span>
<span class='t cell' style='right:524px;transform-origin:100% 0;top:685.00px;color:#000;transform:scaleX(1.0449)'>26/09/2018</span>
<span class='t cell' style='right:323px;transform-origin:100% 0;top:685.00px;color:#000;transform:scaleX(0.9679)'>3322082</span>
<span class='t cell' style='right:243px;transform-origin:100% 0;top:685.00px;color:#000;transform:scaleX(0.9787)'>2168,92</span>
<span class='t cell' style='left:819.6px;transform-origin:0 0;top:685.00px;color:#000;transform:scaleX(1.1158)'>Non</span>
<span class='t cell' style='right:83px;transform-origin:100% 0;top:685.00px;color:#000;transform:scaleX(0.9676)'>12</span>
<span class='t cell' style='right:956px;transform-origin:100% 0;top:705.00px;color:#000;transform:scaleX(0.9676)'>30</span>
<span class='t cell' style='left:106.6px;transform-origin:0 0;top:705.00px;color:#000;transform:scaleX(1.0517)'>Chèque bancaire</span>
<span class='t cell' style='right:524px;transform-origin:100% 0;top:705.00px;color:#000;transform:scaleX(1.0449)'>26/09/2018</span>
<span class='t cell' style='right:323px;transform-origin:100% 0;top:705.00px;color:#000;transform:scaleX(0.9679)'>3322083</span>
<span class='t cell' style='right:243px;transform-origin:100% 0;top:705.00px;color:#000;transform:scaleX(0.9787)'>1351,86</span>
<span class='t cell' style='left:819.6px;transform-origin:0 0;top:705.00px;color:#000;transform:scaleX(1.1158)'>Non</span>
<span class='t cell' style='right:83px;transform-origin:100% 0;top:705.00px;color:#000;transform:scaleX(0.9676)'>12</span>
<span class='t cell' style='right:956px;transform-origin:100% 0;top:725.00px;color:#000;transform:scaleX(0.9676)'>31</span>
<span class='t cell' style='left:106.6px;transform-origin:0 0;top:725.00px;color:#000;transform:scaleX(1.0517)'>Chèque bancaire</span>
<span class='t cell' style='right:524px;transform-origin:100% 0;top:725.00px;color:#000;transform:scaleX(1.0449)'>26/09/2018</span>
<span class='t cell' style='right:243px;transform-origin:100% 0;top:725.00px;color:#000;transform:scaleX(0.9807)'>880,25</span>
<span class='t cell' style='left:819.6px;transform-origin:0 0;top:725.00px;color:#000;transform:scaleX(1.1158)'>Non</span>
<span class='t cell' style='right:83px;transform-origin:100% 0;top:725.00px;color:#000;transform:scaleX(0.9676)'>7</span>
<span class='t cell' style='right:956px;transform-origin:100% 0;top:745.00px;color:#000;transform:scaleX(0.9676)'>32</span>
<span class='t cell' style='left:106.6px;transform-origin:0 0;top:745.00px;color:#000;transform:scaleX(1.0247)'>Chèque vacances</span>
<span class='t cell' style='right:524px;transform-origin:100% 0;top:745.00px;color:#000;transform:scaleX(1.0449)'>26/09/2018</span>
<span class='t cell' style='right:323px;transform-origin:100% 0;top:745.00px;color:#000;transform:scaleX(0.9681)'>27868294</span>
<span class='t cell' style='right:243px;transform-origin:100% 0;top:745.00px;color:#000;transform:scaleX(0.9676)'>700</span>
<span class='t cell' style='left:819.6px;transform-origin:0 0;top:745.00px;color:#000;transform:scaleX(1.1158)'>Non</span>
<span class='t cell' style='right:83px;transform-origin:100% 0;top:745.00px;color:#000;transform:scaleX(0.9676)'>6</span>
<span class='t cell' style='right:956px;transform-origin:100% 0;top:765.00px;color:#000;transform:scaleX(0.9676)'>33</span>
<span class='t cell' style='left:106.6px;transform-origin:0 0;top:765.00px;color:#000;transform:scaleX(1.0027)'>Espèces</span>
<span class='t cell' style='right:524px;transform-origin:100% 0;top:765.00px;color:#000;transform:scaleX(1.0449)'>28/09/2018</span>
<span class='t cell' style='right:243px;transform-origin:100% 0;top:765.00px;color:#000;transform:scaleX(0.9681)'>2200</span>
<span class='t cell' style='left:819.6px;transform-origin:0 0;top:765.00px;color:#000;transform:scaleX(1.1189)'>Oui</span>
<span class='t cell' style='right:83px;transform-origin:100% 0;top:765.00px;color:#000;transform:scaleX(0.9676)'>0</span>
<span class='t cell' style='right:956px;transform-origin:100% 0;top:785.00px;color:#000;transform:scaleX(0.9676)'>34</span>
<span class='t cell' style='left:106.6px;transform-origin:0 0;top:785.00px;color:#000;transform:scaleX(1.0247)'>Chèque vacances</span>
<span class='t cell' style='right:524px;transform-origin:100% 0;top:785.00px;color:#000;transform:scaleX(1.0449)'>16/10/2018</span>
<span class='t cell' style='right:323px;transform-origin:100% 0;top:785.00px;color:#000;transform:scaleX(0.9679)'>7868295</span>
<span class='t cell' style='right:243px;transform-origin:100% 0;top:785.00px;color:#000;transform:scaleX(0.9676)'>275</span>
<span class='t cell' style='left:819.6px;transform-origin:0 0;top:785.00px;color:#000;transform:scaleX(1.1158)'>Non</span>
<span class='t cell' style='right:83px;transform-origin:100% 0;top:785.00px;color:#000;transform:scaleX(0.9676)'>3</span>
<span class='t cell' style='right:956px;transform-origin:100% 0;top:805.00px;color:#000;transform:scaleX(0.9676)'>35</span>
<span class='t cell' style='left:106.6px;transform-origin:0 0;top:805.00px;color:#000;transform:scaleX(1.0517)'>Chèque bancaire</span>
<span class='t cell' style='right:524px;transform-origin:100% 0;top:805.00px;color:#000;transform:scaleX(1.0449)'>16/10/2018</span>
<span class='t cell' style='right:323px;transform-origin:100% 0;top:805.00px;color:#000;transform:scaleX(0.9679)'>3322086</span>
<span class='t cell' style='right:243px;transform-origin:100% 0;top:805.00px;color:#000;transform:scaleX(0.9807)'>563,49</span>
<span class='t cell' style='left:819.6px;transform-origin:0 0;top:805.00px;color:#000;transform:scaleX(1.1158)'>Non</span>
<span class='t cell' style='right:83px;transform-origin:100% 0;top:805.00px;color:#000;transform:scaleX(0.9676)'>6</span>
<span class='t cell' style='right:956px;transform-origin:100% 0;top:825.00px;color:#000;transform:scaleX(0.9676)'>36</span>
<span class='t cell' style='left:106.6px;transform-origin:0 0;top:825.00px;color:#000;transform:scaleX(1.0517)'>Chèque bancaire</span>
<span class='t cell' style='right:524px;transform-origin:100% 0;top:825.00px;color:#000;transform:scaleX(1.0449)'>30/10/2018</span>
<span class='t cell' style='right:323px;transform-origin:100% 0;top:825.00px;color:#000;transform:scaleX(0.9679)'>3322089</span>
<span class='t cell' style='right:243px;transform-origin:100% 0;top:825.00px;color:#000;transform:scaleX(0.9807)'>938,62</span>
<span class='t cell' style='left:819.6px;transform-origin:0 0;top:825.00px;color:#000;transform:scaleX(1.1158)'>Non</span>
<span class='t cell' style='right:83px;transform-origin:100% 0;top:825.00px;color:#000;transform:scaleX(0.9676)'>8</span>
<span class='t hdr' style='left:60.16px;transform-origin:50% 0;top:64.00px;color:#444;transform:scaleX(0.9225)'>A</span>
<span class='t hdr' style='left:157.16px;transform-origin:50% 0;top:64.00px;color:#444;transform:scaleX(0.9225)'>B</span>
<span class='t hdr' style='left:372.80px;transform-origin:50% 0;top:64.00px;color:#444;transform:scaleX(0.8519)'>C</span>
<span class='t hdrb' style='left:632.30px;transform-origin:50% 0;top:64.00px;color:#217346;transform:scaleX(0.9584)'>D</span>
<span class='t hdr' style='left:773.16px;transform-origin:50% 0;top:64.00px;color:#444;transform:scaleX(0.8072)'>E</span>
<span class='t hdr' style='left:853.52px;transform-origin:50% 0;top:64.00px;color:#444;transform:scaleX(0.8802)'>F</span>
<span class='t hdr' style='left:932.44px;transform-origin:50% 0;top:64.00px;color:#444;transform:scaleX(0.8889)'>G</span>
<span class='t hdr' style='left:1012.80px;transform-origin:50% 0;top:64.00px;color:#444;transform:scaleX(0.9584)'>H</span>
<span class='t hdr' style='left:8.38px;transform-origin:50% 0;top:85.00px;color:#444;transform:scaleX(0.9676)'>1</span>
<span class='t hdr' style='left:8.38px;transform-origin:50% 0;top:105.00px;color:#444;transform:scaleX(0.9676)'>2</span>
<span class='t hdr' style='left:8.38px;transform-origin:50% 0;top:125.00px;color:#444;transform:scaleX(0.9676)'>3</span>
<span class='t hdr' style='left:8.38px;transform-origin:50% 0;top:145.00px;color:#444;transform:scaleX(0.9676)'>4</span>
<span class='t hdr' style='left:8.38px;transform-origin:50% 0;top:165.00px;color:#444;transform:scaleX(0.9676)'>5</span>
<span class='t hdr' style='left:8.38px;transform-origin:50% 0;top:185.00px;color:#444;transform:scaleX(0.9676)'>6</span>
<span class='t hdr' style='left:8.38px;transform-origin:50% 0;top:205.00px;color:#444;transform:scaleX(0.9676)'>7</span>
<span class='t hdr' style='left:8.38px;transform-origin:50% 0;top:225.00px;color:#444;transform:scaleX(0.9676)'>8</span>
<span class='t hdr' style='left:8.38px;transform-origin:50% 0;top:245.00px;color:#444;transform:scaleX(0.9676)'>9</span>
<span class='t hdr' style='left:4.77px;transform-origin:50% 0;top:265.00px;color:#444;transform:scaleX(0.9676)'>10</span>
<span class='t hdr' style='left:5.25px;transform-origin:50% 0;top:285.00px;color:#444;transform:scaleX(1.0370)'>11</span>
<span class='t hdr' style='left:4.77px;transform-origin:50% 0;top:305.00px;color:#444;transform:scaleX(0.9676)'>12</span>
<span class='t hdr' style='left:4.77px;transform-origin:50% 0;top:325.00px;color:#444;transform:scaleX(0.9676)'>13</span>
<span class='t hdr' style='left:4.77px;transform-origin:50% 0;top:345.00px;color:#444;transform:scaleX(0.9676)'>14</span>
<span class='t hdr' style='left:4.77px;transform-origin:50% 0;top:365.00px;color:#444;transform:scaleX(0.9676)'>15</span>
<span class='t hdr' style='left:4.77px;transform-origin:50% 0;top:385.00px;color:#444;transform:scaleX(0.9676)'>16</span>
<span class='t hdr' style='left:4.77px;transform-origin:50% 0;top:405.00px;color:#444;transform:scaleX(0.9676)'>17</span>
<span class='t hdr' style='left:4.77px;transform-origin:50% 0;top:425.00px;color:#444;transform:scaleX(0.9676)'>18</span>
<span class='t hdr' style='left:4.77px;transform-origin:50% 0;top:445.00px;color:#444;transform:scaleX(0.9676)'>19</span>
<span class='t hdr' style='left:4.77px;transform-origin:50% 0;top:465.00px;color:#444;transform:scaleX(0.9676)'>20</span>
<span class='t hdr' style='left:4.77px;transform-origin:50% 0;top:485.00px;color:#444;transform:scaleX(0.9676)'>21</span>
<span class='t hdr' style='left:4.77px;transform-origin:50% 0;top:505.00px;color:#444;transform:scaleX(0.9676)'>22</span>
<span class='t hdr' style='left:4.77px;transform-origin:50% 0;top:525.00px;color:#444;transform:scaleX(0.9676)'>23</span>
<span class='t hdr' style='left:4.77px;transform-origin:50% 0;top:545.00px;color:#444;transform:scaleX(0.9676)'>24</span>
<span class='t hdrb' style='left:4.77px;transform-origin:50% 0;top:565.00px;color:#217346;transform:scaleX(0.9676)'>25</span>
<span class='t hdr' style='left:4.77px;transform-origin:50% 0;top:585.00px;color:#444;transform:scaleX(0.9676)'>26</span>
<span class='t hdr' style='left:4.77px;transform-origin:50% 0;top:605.00px;color:#444;transform:scaleX(0.9676)'>27</span>
<span class='t hdr' style='left:4.77px;transform-origin:50% 0;top:625.00px;color:#444;transform:scaleX(0.9676)'>28</span>
<span class='t hdr' style='left:4.77px;transform-origin:50% 0;top:645.00px;color:#444;transform:scaleX(0.9676)'>29</span>
<span class='t hdr' style='left:4.77px;transform-origin:50% 0;top:665.00px;color:#444;transform:scaleX(0.9676)'>30</span>
<span class='t hdr' style='left:4.77px;transform-origin:50% 0;top:685.00px;color:#444;transform:scaleX(0.9676)'>31</span>
<span class='t hdr' style='left:4.77px;transform-origin:50% 0;top:705.00px;color:#444;transform:scaleX(0.9676)'>32</span>
<span class='t hdr' style='left:4.77px;transform-origin:50% 0;top:725.00px;color:#444;transform:scaleX(0.9676)'>33</span>
<span class='t hdr' style='left:4.77px;transform-origin:50% 0;top:745.00px;color:#444;transform:scaleX(0.9676)'>34</span>
<span class='t hdr' style='left:4.77px;transform-origin:50% 0;top:765.00px;color:#444;transform:scaleX(0.9676)'>35</span>
<span class='t hdr' style='left:4.77px;transform-origin:50% 0;top:785.00px;color:#444;transform:scaleX(0.9676)'>36</span>
<span class='t hdr' style='left:4.77px;transform-origin:50% 0;top:805.00px;color:#444;transform:scaleX(0.9676)'>37</span>
<span class='t hdr' style='left:4.77px;transform-origin:50% 0;top:825.00px;color:#444;transform:scaleX(0.9676)'>38</span>
<span class='t cell' style='left:11px;transform-origin:0 0;top:12.00px;color:#333;transform:scaleX(0.9640)'>D25</span>
<span class='t cell' style='left:261px;transform-origin:0 0;top:12.00px;color:#333;transform:scaleX(0.9679)'>7868291</span>
<span class='t ann' style='left:552px;transform-origin:0 0;top:136.26px;color:#000;transform:scaleX(1.0751)'>Numéro de réf de remise</span>
<span class='t ann' style='left:552px;transform-origin:0 0;top:154.96px;color:#000;transform:scaleX(1.0446)'>de chèque</span>
</body></html>
